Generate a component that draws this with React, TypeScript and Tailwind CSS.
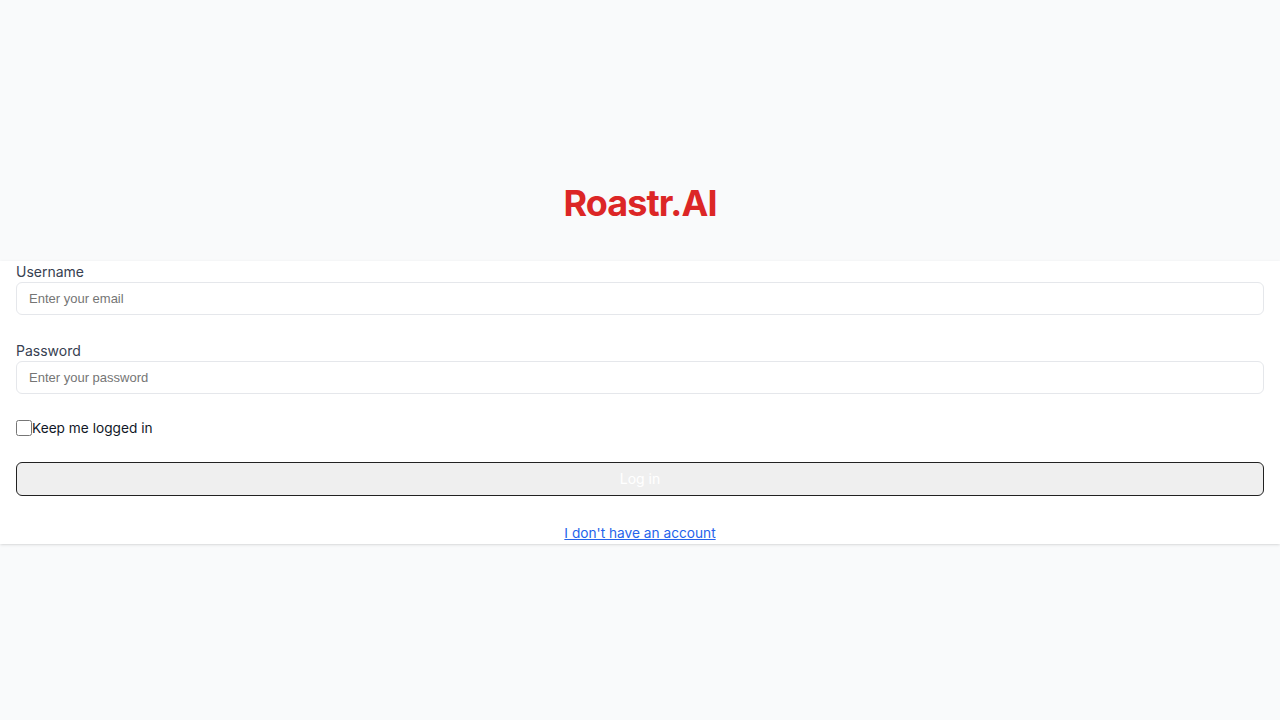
import React from "react";

export default function App() {
  return (
    <div
      className="min-h-screen bg-[#f9fafb] flex flex-col pt-[183px]"
      style={{ fontFamily: "Inter, 'Noto Sans', sans-serif" }}
    >
      <h1 className="text-center text-4xl font-bold tracking-tight text-[#dc2626] mb-[38px]">
        Roastr.AI
      </h1>
      <div className="bg-white shadow-sm px-4 pt-px pb-px">
        <div className="mb-[26px]">
          <label className="block text-sm text-[#374151]">Username</label>
          <input
            type="email"
            placeholder="Enter your email"
            className="block w-full h-[33px] rounded-md border border-[#e5e7eb] px-3 text-[13px] text-[#111827] placeholder:text-[#757575] outline-none"
            style={{ fontFamily: "'Liberation Sans', Arial, sans-serif" }}
          />
        </div>
        <div className="mb-6">
          <label className="block text-sm text-[#374151]">Password</label>
          <input
            type="password"
            placeholder="Enter your password"
            className="block w-full h-[33px] rounded-md border border-[#e5e7eb] px-3 text-[13px] text-[#111827] placeholder:text-[#757575] outline-none"
            style={{ fontFamily: "'Liberation Sans', Arial, sans-serif" }}
          />
        </div>
        <div className="flex items-center h-5 mb-6">
          <input type="checkbox" className="w-4 h-4 m-0" />
          <span className="text-[13.7px] text-[#111827]">Keep me logged in</span>
        </div>
        <button className="block w-full h-[34px] rounded-md border border-[#222] bg-[#efefef] text-sm text-white">
          Log in
        </button>
        <div className="text-center mt-[26px] leading-5">
          <a href="#" className="text-[13.7px] text-[#2563eb] underline">
            I don't have an account
          </a>
        </div>
      </div>
    </div>
  );
}
